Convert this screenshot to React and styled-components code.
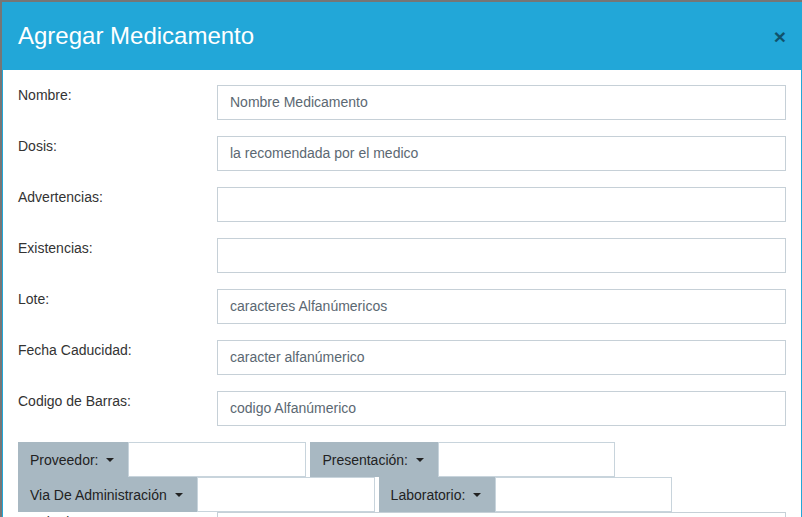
import React from 'react';
import styled, { createGlobalStyle } from 'styled-components';

const GlobalStyle = createGlobalStyle`
  html, body {
    margin: 0;
    padding: 0;
    overflow: hidden;
  }
  body {
    font-family: "Liberation Sans", Arial, sans-serif;
    font-size: 14px;
    color: #333;
  }
`;

const Backdrop = styled.div`
  height: 100vh;
  background: #767676;
  padding: 2px 0 0 2px;
  box-sizing: border-box;
  overflow: hidden;
`;

const Modal = styled.div`
  width: 800px;
  border: 1px solid #22a7d8;
  background: #fff;
  box-sizing: border-box;
`;

const Header = styled.div`
  height: 67px;
  background: #22a7d8;
  display: flex;
  align-items: center;
  justify-content: space-between;
  padding: 0 15px;
`;

const Title = styled.h4`
  margin: 0;
  font-size: 24px;
  font-weight: 400;
  line-height: 1.1;
  color: #fff;
`;

const Close = styled.button`
  background: none;
  border: 0;
  padding: 0;
  font-family: "Liberation Sans", Arial, sans-serif;
  font-size: 21px;
  font-weight: 700;
  line-height: 1;
  color: #000;
  opacity: 0.5;
  cursor: pointer;
`;

const Body = styled.div`
  padding: 15px 15px 0;
`;

const FormRow = styled.div`
  display: grid;
  grid-template-columns: 199px 1fr;
  margin-bottom: 16px;
`;

const Label = styled.label`
  font-size: 14px;
  line-height: 20px;
  color: #333;
`;

const Input = styled.input`
  height: 35px;
  box-sizing: border-box;
  border: 1px solid #c6d0d7;
  border-radius: 0;
  padding: 0 12px 2px;
  font-family: "Liberation Sans", Arial, sans-serif;
  font-size: 14px;
  color: #5b6872;
  outline: none;

  &::placeholder {
    color: #5b6872;
    opacity: 1;
  }
`;

const GroupRow = styled.div`
  display: flex;
  gap: 4px;
`;

const Group = styled.div`
  display: flex;
  height: 35px;
`;

const Addon = styled.span`
  display: flex;
  align-items: center;
  background: #a8b8c2;
  padding: 0 14px 0 12px;
  font-size: 14px;
  color: #222;
  white-space: pre;
`;

const Caret = styled.span`
  display: inline-block;
  margin-left: 4px;
  border-top: 4px solid #222;
  border-left: 4px solid transparent;
  border-right: 4px solid transparent;
`;

const GroupInput = styled(Input)`
  width: ${(p) => p.$w}px;
  border-color: #c8d4dc;
`;

const fields = [
  { label: 'Nombre:', placeholder: 'Nombre Medicamento' },
  { label: 'Dosis:', placeholder: 'la recomendada por el medico' },
  { label: 'Advertencias:', placeholder: '' },
  { label: 'Existencias:', placeholder: '' },
  { label: 'Lote:', placeholder: 'caracteres Alfanúmericos' },
  { label: 'Fecha Caducidad:', placeholder: 'caracter alfanúmerico' },
  { label: 'Codigo de Barras:', placeholder: 'codigo Alfanúmerico' },
];

const groups = [
  [
    { label: 'Proveedor:', w: 178 },
    { label: 'Presentación:', w: 177 },
  ],
  [
    { label: 'Via De Administración', w: 178 },
    { label: 'Laboratorio:', w: 177 },
  ],
];

export default function App() {
  return (
    <>
      <GlobalStyle />
      <Backdrop>
        <Modal>
          <Header>
            <Title>Agregar Medicamento</Title>
            <Close aria-label="Cerrar">×</Close>
          </Header>
          <Body>
            {fields.map((f) => (
              <FormRow key={f.label}>
                <Label>{f.label}</Label>
                <Input placeholder={f.placeholder} />
              </FormRow>
            ))}
            {groups.map((row, i) => (
              <GroupRow key={i}>
                {row.map((g) => (
                  <Group key={g.label}>
                    <Addon>
                      {g.label} <Caret />
                    </Addon>
                    <GroupInput $w={g.w} />
                  </Group>
                ))}
              </GroupRow>
            ))}
            <FormRow>
              <Label>Precio de Venta:</Label>
              <Input />
            </FormRow>
          </Body>
        </Modal>
      </Backdrop>
    </>
  );
}
